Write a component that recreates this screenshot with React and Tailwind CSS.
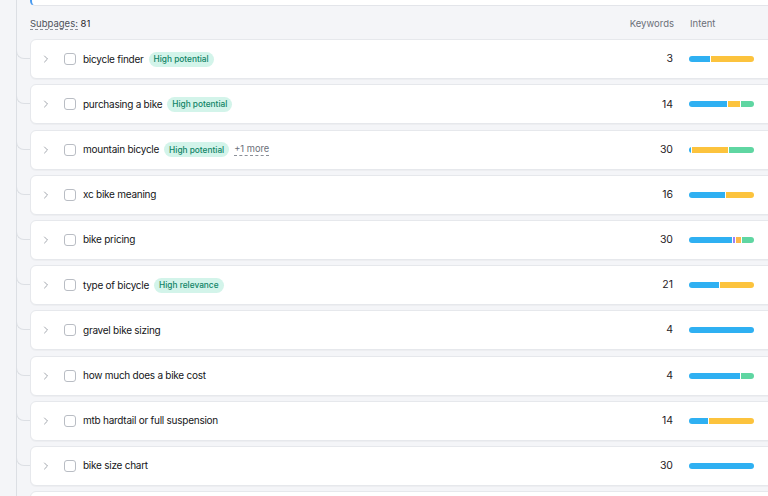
import React from "react";
import { ChevronRight } from "lucide-react";

const COLORS = {
  blue: "bg-[#2fb0f2]",
  yellow: "bg-[#fcc33d]",
  green: "bg-[#5fd6a2]",
  purple: "bg-[#a080f4]",
  orange: "bg-[#fdb84a]",
};

const rows = [
  { name: "bicycle finder", badge: "High potential", kw: 3, intent: [["blue", 33], ["yellow", 67]] },
  { name: "purchasing a bike", badge: "High potential", kw: 14, intent: [["blue", 60], ["yellow", 20], ["green", 20]] },
  { name: "mountain bicycle", badge: "High potential", more: "+1 more", kw: 30, intent: [["blue", 3], ["yellow", 57], ["green", 40]] },
  { name: "xc bike meaning", kw: 16, intent: [["blue", 57], ["yellow", 43]] },
  { name: "bike pricing", kw: 30, intent: [["blue", 70], ["purple", 3], ["orange", 8], ["green", 19]] },
  { name: "type of bicycle", badge: "High relevance", kw: 21, intent: [["blue", 47], ["yellow", 53]] },
  { name: "gravel bike sizing", kw: 4, intent: [["blue", 100]] },
  { name: "how much does a bike cost", kw: 4, intent: [["blue", 80], ["green", 20]] },
  { name: "mtb hardtail or full suspension", kw: 14, intent: [["blue", 29], ["yellow", 71]] },
  { name: "bike size chart", kw: 30, intent: [["blue", 100]] },
  { name: "", kw: "", intent: [] },
];

const IntentBar = ({ parts }) => (
  <div className="flex h-[6px] w-[65px] gap-px overflow-hidden rounded-full">
    {parts.map(([c, w], i) => (
      <span key={i} className={`h-full ${COLORS[c]}`} style={{ width: `${w}%` }} />
    ))}
  </div>
);

const Row = ({ row }) => (
  <div className="relative mt-[5.2px]">
    {/* tree connector */}
    <div className="absolute left-[-14px] top-0 h-[20px] w-[14px] rounded-bl-[8px] border-b border-l border-[#dcdfe4]" />
    <div className="flex h-[40px] items-center rounded-l-[6px] border border-[#e6e8ec] bg-white pl-[9px] pr-[35px] shadow-[0_1px_1px_rgba(0,0,0,0.03)]">
      {row.name && (
        <>
          <ChevronRight size={12} strokeWidth={1.6} className="text-[#8a8f98]" />
          <span className="ml-[12px] h-[12px] w-[12px] rounded-[3px] border border-[#b9bdc4] bg-white" />
          <span className="ml-[7px] text-[10px] tracking-[-0.25px] text-[#141518]">{row.name}</span>
          {row.badge && (
            <span className="ml-[5px] rounded-full bg-[#d3f4ea] px-[5px] py-[1.5px] text-[8.3px] font-medium leading-[12px] text-[#0f8466]">
              {row.badge}
            </span>
          )}
          {row.more && (
            <span className="ml-[5px] border-b border-dashed border-[#8a8f98] text-[9.3px] leading-[12px] text-[#6b7079]">
              {row.more}
            </span>
          )}
          <span className="ml-auto text-[10.5px] text-[#1f2226]">{row.kw}</span>
          <div className="ml-[16px]">
            <IntentBar parts={row.intent} />
          </div>
        </>
      )}
    </div>
  </div>
);

export default function App() {
  return (
    <div className="relative h-[496px] w-[768px] overflow-hidden bg-[#f4f5f8] font-['Inter','Noto_Sans',sans-serif]">
      <div className="absolute bottom-0 left-[16px] top-0 w-px bg-[#dcdfe4]" />
      <div className="w-[790px] pl-[30px]">
        <div className="h-[6px] rounded-bl-[5px] border border-l-2 border-t-0 border-[#e3e5ea] border-l-[#4a9bf0] bg-white" />
        <div className="flex h-[28px] items-center pr-[35px] pt-[8px] text-[9.5px] text-[#6b7079]">
          <span className="text-[#4d525a]">
            <span className="border-b border-dashed border-[#8a8f98]">Subpages:</span>{" "}
            <span className="text-[#1f2226]">81</span>
          </span>
          <span className="ml-auto">Keywords</span>
          <span className="ml-[16px] w-[65px]">Intent</span>
        </div>
        <div>
          {rows.map((r, i) => (
            <Row key={i} row={r} />
          ))}
        </div>
      </div>
    </div>
  );
}
